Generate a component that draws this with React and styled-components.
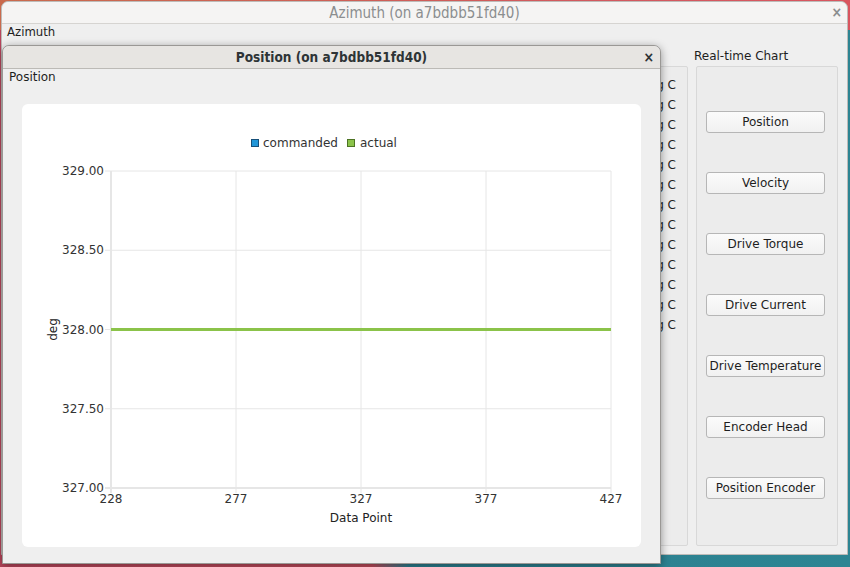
import React from "react";
import styled, { createGlobalStyle } from "styled-components";

const GlobalStyle = createGlobalStyle`
  html, body {
    margin: 0;
    padding: 0;
    overflow: hidden;
  }
  body {
    font-family: "DejaVu Sans", "Liberation Sans", sans-serif;
    font-size: 12px;
    color: #2e2e2e;
  }
`;

// fond du bureau
const Desktop = styled.div`
  position: relative;
  width: 850px;
  height: 567px;
  overflow: hidden;
  padding: 1px 2px 0 1px;
  box-sizing: border-box;
  background: linear-gradient(97deg, #b8455c 0%, #bf4a5a 48%, #2b7e8e 52%, #2d8593 100%);
  &::before {
    content: "";
    position: absolute;
    inset: 0 0 auto 0;
    height: 30px;
    background: linear-gradient(90deg, #c96a4c, #d2585e 70%, #d9555f);
    z-index: 0;
  }
`;

const Window = styled.div`
  position: relative;
  z-index: 1;
  display: flex;
  flex-direction: column;
  height: 554px;
  background: #efefef;
  border: 1px solid #bdbbb8;
  border-radius: 7px 7px 0 0;
  box-sizing: border-box;
`;

const TitleBar = styled.div`
  position: relative;
  flex: none;
  height: ${(p) => (p.$active ? 22 : 21)}px;
  display: flex;
  align-items: center;
  justify-content: center;
  background: ${(p) => (p.$active ? "#e7e5e2" : "#f5f4f3")};
  border-bottom: 1px solid ${(p) => (p.$active ? "#bcbab6" : "#d6d4d1")};
  border-radius: 7px 7px 0 0;
  font-family: "DejaVu Sans Condensed", "DejaVu Sans", sans-serif;
  font-stretch: condensed;
  font-size: ${(p) => (p.$active ? 13.5 : 15)}px;
  font-weight: ${(p) => (p.$active ? "bold" : "normal")};
  color: ${(p) => (p.$active ? "#2e3436" : "#8b8e8f")};
`;

const CloseBox = styled.span`
  position: absolute;
  right: ${(p) => p.$right}px;
  top: ${(p) => (p.$active ? 3 : 2)}px;
  font-family: "DejaVu Sans", sans-serif;
  font-size: 14px;
  font-weight: bold;
  color: ${(p) => (p.$active ? "#2e3436" : "#8b8e8f")};
`;

const OuterBody = styled.div`
  flex: 1;
  display: flex;
  flex-direction: column;
  padding: 0 9px 8px 5px;
  min-height: 0;
`;

const WinLabel = styled.div`
  height: 16px;
  line-height: 16px;
  font-family: ${(p) => (p.$narrow ? '"DejaVu Sans Condensed", "DejaVu Sans", sans-serif' : '"DejaVu Sans", sans-serif')};
  font-stretch: ${(p) => (p.$narrow ? "condensed" : "normal")};
  font-size: ${(p) => (p.$narrow ? 13 : 12)}px;
  color: #1e1e1e;
`;

const Columns = styled.div`
  flex: 1;
  display: flex;
  gap: 8px;
  margin-top: 8px;
  min-height: 0;
`;

const Column = styled.div`
  display: flex;
  flex-direction: column;
  ${(p) => (p.$width ? `width: ${p.$width}px; flex: none;` : "flex: 1;")}
`;

const GroupTitle = styled.div`
  height: 16px;
  line-height: 16px;
  margin: 0 0 2px -2px;
  font-size: 12px;
  color: #1e1e1e;
`;

const GroupBox = styled.div`
  flex: 1;
  display: flex;
  flex-direction: column;
  border: 1px solid #d8d8d8;
  border-radius: 2px;
  background: #ececec;
  box-sizing: border-box;
`;

const ReadingList = styled(GroupBox)`
  padding: 8px 11px 0 0;
  align-items: flex-end;
`;

const Reading = styled.div`
  height: 20px;
  line-height: 20px;
  font-size: 12px;
  color: #1e1e1e;
`;

const ButtonList = styled(GroupBox)`
  padding: 44px 12px 0 9px;
  gap: 39px;
`;

const ChartButton = styled.button`
  height: 22px;
  width: 100%;
  padding: 0;
  border: 1px solid #b6b6b6;
  border-radius: 3px;
  background: linear-gradient(#fbfbfb, #f1f1f1);
  font-family: "DejaVu Sans", sans-serif;
  font-size: 12px;
  color: #1e1e1e;
  white-space: nowrap;
`;

// fenêtre du graphique, posée par-dessus
const ChartWindow = styled(Window)`
  position: absolute;
  z-index: 2;
  left: 2px;
  top: 45px;
  width: 659px;
  height: 519px;
  border-color: #9a9895;
  box-shadow: 0 2px 9px rgba(0, 0, 0, 0.4);
`;

const ChartBody = styled.div`
  flex: 1;
  display: flex;
  flex-direction: column;
  padding: 0 18px 0 6px;
`;

const Card = styled.div`
  margin: 19px 0 0 13px;
  width: 619px;
  height: 443px;
  background: #ffffff;
  border-radius: 6px;
`;

const readings = [
  "Encoder Temp: 31.2 deg C",
  "Motor 1 Temp: 33.0 deg C",
  "Motor 2 Temp: 32.8 deg C",
  "Drive 1 Temp: 35.5 deg C",
  "Drive 2 Temp: 35.1 deg C",
  "Drive 3 Temp: 34.9 deg C",
  "Drive 4 Temp: 35.0 deg C",
  "Bearing 1 Temp: 29.6 deg C",
  "Bearing 2 Temp: 29.4 deg C",
  "Cabinet 1 Temp: 27.3 deg C",
  "Cabinet 2 Temp: 27.1 deg C",
  "Ambient Temp: 22.4 deg C",
  "Base Temp: 24.0 deg C",
];

const buttons = [
  "Position",
  "Velocity",
  "Drive Torque",
  "Drive Current",
  "Drive Temperature",
  "Encoder Head",
  "Position Encoder",
];

const yTicks = ["329.00", "328.50", "328.00", "327.50", "327.00"];
const xTicks = ["228", "277", "327", "377", "427"];

function PositionChart() {
  const left = 89;
  const right = 589;
  const top = 67;
  const bottom = 384;
  const ys = yTicks.map((_, i) => top + (i * (bottom - top)) / 4);
  const xs = xTicks.map((_, i) => left + (i * (right - left)) / 4);
  const txt = { fontFamily: "DejaVu Sans, sans-serif", fontSize: 12, fill: "#333" };

  return (
    <svg width="619" height="443" viewBox="0 0 619 443">
      {/* légende */}
      <rect x="229.5" y="35.5" width="7" height="7" fill="#2196d8" stroke="#17507a" />
      <text x="241" y="43" {...txt}>commanded</text>
      <rect x="325.5" y="35.5" width="7" height="7" fill="#8bc34a" stroke="#4d7324" />
      <text x="338" y="43" {...txt}>actual</text>

      {/* grille */}
      {ys.map((y, i) => (
        <g key={"y" + i}>
          <line x1={left - 6} x2={right} y1={y} y2={y} stroke="#e6e6e6" strokeWidth={i === 4 ? 2 : 1} />
          <text x={left - 7} y={y + 4} textAnchor="end" {...txt}>{yTicks[i]}</text>
        </g>
      ))}
      {xs.map((x, i) => (
        <g key={"x" + i}>
          <line x1={x} x2={x} y1={top} y2={bottom + 5} stroke="#e6e6e6" strokeWidth={i === 0 ? 2 : 1} />
          <text x={x} y={bottom + 15} textAnchor="middle" {...txt}>{xTicks[i]}</text>
        </g>
      ))}

      {/* série */}
      <line x1={left} x2={right} y1={ys[2]} y2={ys[2]} stroke="#8bc34a" strokeWidth="3" />

      <text x={(left + right) / 2} y={418} textAnchor="middle" {...txt} fill="#222">Data Point</text>
      <text transform={`translate(35 ${ys[2]}) rotate(-90)`} textAnchor="middle" {...txt} fill="#222">deg</text>
    </svg>
  );
}

export default function App() {
  return (
    <>
      <GlobalStyle />
      <Desktop>
        <Window>
          <TitleBar>
            Azimuth (on a7bdbb51fd40)
            <CloseBox $right={5}>×</CloseBox>
          </TitleBar>
          <OuterBody>
            <WinLabel $narrow>Azimuth</WinLabel>
            <Columns>
              <Column>
                <GroupTitle />
                <ReadingList>
                  {readings.map((r) => (
                    <Reading key={r}>{r}</Reading>
                  ))}
                </ReadingList>
              </Column>
              <Column $width={142}>
                <GroupTitle>Real-time Chart</GroupTitle>
                <ButtonList>
                  {buttons.map((b) => (
                    <ChartButton key={b}>{b}</ChartButton>
                  ))}
                </ButtonList>
              </Column>
            </Columns>
          </OuterBody>
        </Window>

        <ChartWindow>
          <TitleBar $active>
            Position (on a7bdbb51fd40)
            <CloseBox $active $right={6}>×</CloseBox>
          </TitleBar>
          <ChartBody>
            <WinLabel>Position</WinLabel>
            <Card>
              <PositionChart />
            </Card>
          </ChartBody>
        </ChartWindow>
      </Desktop>
    </>
  );
}
